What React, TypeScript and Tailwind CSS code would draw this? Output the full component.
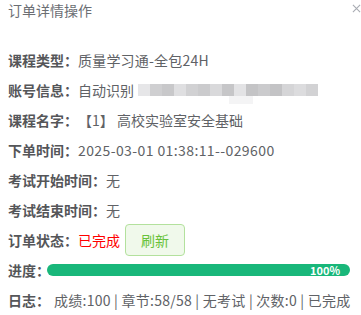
import React from "react";

const blurColors = [
  "#e6e6e8", "#cfcfd1", "#c8c8ca", "#dfdfe1", "#d1d1d3", "#cbcbcd", "#d9d9db",
  "#c6c6c8", "#e3e3e5", "#c4c4c6", "#cbcbcd", "#c3c3c5", "#d5d5d7", "#dcdcde", "#d2d2d4",
];

function Row({ label, children }: { label: string; children?: React.ReactNode }) {
  return (
    <div className="flex h-[30px] items-center">
      <span className="font-bold text-[#555659]">{label}</span>
      {children}
    </div>
  );
}

export default function App() {
  return (
    <div
      className="w-[361px] h-[315px] overflow-hidden bg-white text-[14px] text-[#606266]"
      style={{ fontFamily: '"Microsoft YaHei", "Noto Sans CJK SC", sans-serif' }}
    >
      {/* 标题栏 */}
      <div className="flex h-[20px] items-center justify-between pl-[8px]">
        <span className="text-[#6b6e73]">订单详情操作</span>
        <svg width="9" height="9" viewBox="0 0 10 10" className="mt-[-4px]">
          <path d="M1 1 L9 9 M9 1 L1 9" stroke="#a8abb2" strokeWidth="1.2" />
        </svg>
      </div>

      <div className="mt-[25px] px-[8px]">
        <Row label="课程类型：">
          <span className="tracking-[0.2px]">质量学习通-全包24H</span>
        </Row>
        <Row label="账号信息：">
          <span>自动识别</span>
          <div className="relative ml-[4px] flex h-[12px]">
            {blurColors.map((c, i) => (
              <div key={i} className="h-[12px] w-[12px]" style={{ backgroundColor: c }} />
            ))}
            <div className="absolute left-[91px] top-[12px] h-[8px] w-[24px] bg-[#f4f4f5]" />
          </div>
        </Row>
        <Row label="课程名字：">
          <span>【1】 高校实验室安全基础</span>
        </Row>
        <Row label="下单时间：">
          <span className="tracking-[0.4px]">2025-03-01 01:38:11--029600</span>
        </Row>
        <Row label="考试开始时间：">
          <span>无</span>
        </Row>
        <Row label="考试结束时间：">
          <span>无</span>
        </Row>
        <Row label="订单状态：">
          <span className="text-[#ff0000]">已完成</span>
          <button className="ml-[5px] flex h-[32px] w-[60px] items-center justify-center rounded-[4px] border border-[#b3e19d] bg-[#f0f9eb] text-[#67c23a]">
            刷新
          </button>
        </Row>
        <Row label="进度：">
          <div className="ml-[-3px] flex h-[12px] w-[303px] items-center justify-end rounded-full bg-[#19b77a] pr-[10px]">
            <span className="text-[11px] font-bold leading-none text-white">100%</span>
          </div>
        </Row>
        <Row label="日志：">
          <span className="ml-[4px] tracking-[0.25px]">成绩:100 | 章节:58/58 | 无考试 | 次数:0 | 已完成</span>
        </Row>
      </div>
    </div>
  );
}
